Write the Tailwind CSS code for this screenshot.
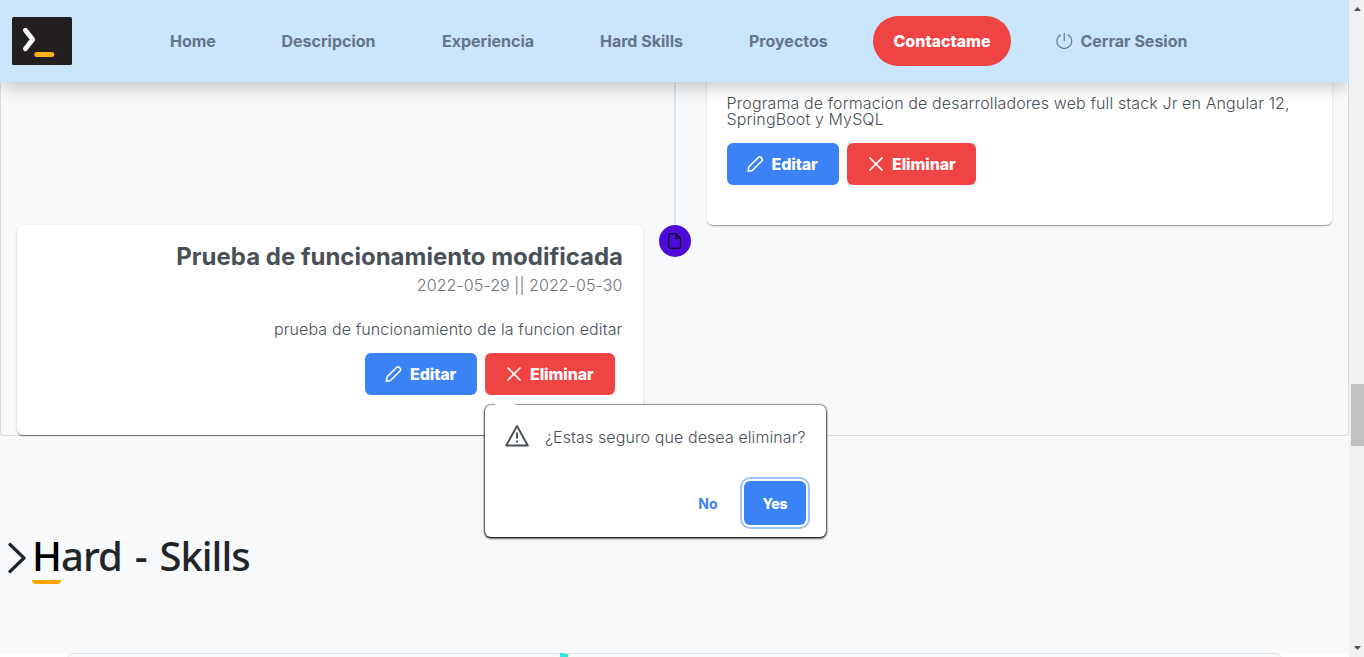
<!DOCTYPE html>
<html lang="es">
<head>
<meta charset="utf-8">
<title>Portfolio</title>
<script src="https://cdn.jsdelivr.net/npm/@tailwindcss/browser@4"></script>
</head>
<body class="flex h-[657px] w-[1364px] overflow-hidden bg-white font-['Inter',sans-serif] text-[#495057]">
<div class="relative flex h-[657px] w-[1349px] flex-col overflow-hidden">
  <header class="relative z-10 flex h-[82px] shrink-0 items-center bg-[#c9e6fb] pl-3 text-base font-bold text-[#64748b] shadow-[0_8px_16px_-2px_rgba(0,0,0,0.2)]">
    <svg class="mr-[98px] h-12 w-[60px]" viewBox="0 0 60 48" fill="none" stroke-linecap="round" stroke-linejoin="round">
      <rect width="60" height="48" rx="1.5" fill="#231f20"/>
      <path d="M13.4 13.2l7.3 9.3-7.3 9.3" stroke="#fff" stroke-width="4.8"/>
      <path d="M24.8 37.5h15" stroke="#fbb017" stroke-width="5"/>
    </svg>
    <nav class="flex items-center whitespace-nowrap">
      <a class="w-[111.500px]">Home</a>
      <a class="w-[160.500px]">Descripcion</a>
      <a class="w-[158px]">Experiencia</a>
      <a class="w-[149px]">Hard Skills</a>
      <a class="w-[124px]">Proyectos</a>
      <a class="flex h-[50px] w-[138px] items-center justify-center rounded-full bg-[#ef4444] font-extrabold text-white">Contactame</a>
      <a class="ml-[45px] flex items-center">
        <svg class="mr-2 h-4 w-[16.500px]" viewBox="0 0 16 16" fill="none" stroke="#64748b" stroke-width="1.2" stroke-linecap="round"><path d="M8 .7v7M4 1.9a7.4 7.4 0 1 0 8.1 0"/></svg>
        Cerrar Sesion</a>
    </nav>
  </header>

  <main class="flex h-[571px] shrink-0 flex-col bg-[#f8f9fb]">
    <section class="h-[354px] rounded-b border-x border-b border-[#d8dadd] px-4">
      <div class="grid grid-cols-[626px_64px_625px]">
        <div></div>
        <div class="flex justify-center"><div class="h-[143px] w-0.5 bg-[#dee2e6]"></div></div>
        <article class="h-[143px] rounded-b-md bg-white px-5 pt-[13px] shadow-[0_2px_1px_-1px_rgba(0,0,0,0.2),0_1px_1px_rgba(0,0,0,0.14),0_1px_3px_rgba(0,0,0,0.12)]">
          <p class="-ml-[0.500px] text-base leading-4 font-light tracking-[0.12px] whitespace-nowrap">Programa de formacion de desarrolladores web full stack Jr en Angular 12,<br>SpringBoot y MySQL</p>
          <div class="mt-4 flex gap-2 font-extrabold tracking-[-0.1px] text-white">
            <button class="flex h-[42px] w-28 items-center rounded-md bg-[#3b82f6] pl-5">
              <svg class="mr-2 h-4 w-[16.500px]" viewBox="0 0 16 16" fill="none" stroke="currentColor" stroke-width="1.6" stroke-linejoin="round"><path d="M.9 15.200l.6-4.200L11 1.500q1.500-1.300 3.200.3t.3 3.200L5 14.500z"/></svg>Editar</button>
            <button class="flex h-[42px] w-[129px] items-center rounded-md bg-[#ef4444] pl-[21px]">
              <svg class="mr-2 h-4 w-4" viewBox="0 0 16 16" stroke="currentColor" stroke-width="1.7" stroke-linecap="round"><path d="M2 2l12 12M14 2L2 14"/></svg>Eliminar</button>
          </div>
        </article>
        <article class="flex h-[210px] flex-col items-end rounded-md bg-white px-5 pt-[17px] shadow-[0_2px_1px_-1px_rgba(0,0,0,0.3),0_1px_1px_rgba(0,0,0,0.2),0_1px_3px_rgba(0,0,0,0.12)]">
          <h3 class="text-2xl leading-[29px] font-bold whitespace-nowrap">Prueba de funcionamiento modificada</h3>
          <p class="mt-1 mr-[0.500px] text-base leading-5 font-light tracking-[0.08px] text-[#6c757d]">2022-05-29 || 2022-05-30</p>
          <p class="mt-6 mr-[0.500px] text-base leading-5 font-light tracking-[0.12px]">prueba de funcionamiento de la funcion editar</p>
          <div class="mt-3.5 mr-2 flex gap-2 font-extrabold tracking-[-0.1px] text-white">
            <button class="flex h-[42px] w-28 items-center rounded-md bg-[#3b82f6] pl-5">
              <svg class="mr-2 h-4 w-[17px]" viewBox="0 0 16 16" fill="none" stroke="currentColor" stroke-width="1.6" stroke-linejoin="round"><path d="M.9 15.200l.6-4.200L11 1.500q1.500-1.300 3.200.3t.3 3.200L5 14.500z"/></svg>Editar</button>
            <button class="flex h-[42px] w-[130px] items-center rounded-md bg-[#ef4444] pl-[21px]">
              <svg class="mr-2 h-4 w-4" viewBox="0 0 16 16" stroke="currentColor" stroke-width="1.7" stroke-linecap="round"><path d="M2 2l12 12M14 2L2 14"/></svg>Eliminar</button>
          </div>
        </article>
        <div class="flex justify-center">
          <div class="flex h-8 w-8 items-center justify-center rounded-full bg-[#4c0bd8]">
            <svg class="h-4 w-4" viewBox="0 0 16 16" fill="none" stroke="#000" stroke-width="1.1" stroke-linejoin="round"><path d="M3.300.8h5.700l4.500 4.300v8.600q0 1.500-1.500 1.500H3.300Q1.800 15.200 1.800 13.700V2.300Q1.800.8 3.300.8zM9 .8v4.500h4.500"/></svg>
          </div>
        </div>
      </div>
    </section>
    <h2 class="mt-[94px] flex pl-2 font-['Noto_Sans',sans-serif] text-[40px] leading-[52px] font-medium whitespace-nowrap text-[#212529]">
      <svg class="mt-3 mr-1.5 h-8 w-[18px]" viewBox="0 0 18 32" fill="none" stroke="#212529" stroke-width="3.200" stroke-linecap="round" stroke-linejoin="round"><path d="M2 2.500l14 13.500L2 29.500"/></svg>
      <span class="h-[54px] w-[29px] rounded-b-sm border-b-4 border-[#ffa500] text-black">H</span><span class="tracking-[-1px] [word-spacing:3.500px]">ard - Skills</span>
    </h2>
  </main>
  <div class="ml-[67px] h-10 w-[1215px] shrink-0 rounded-t-md border border-[#dee2e6] bg-[#f8f9fb] pl-[492px]">
    <div class="-mt-px flex"><i class="h-5 w-1 bg-[#2ee6f0]"></i><i class="mt-px h-4 w-1 bg-[#35e5d0]"></i></div>
  </div>

  <div class="absolute top-[405px] left-[485px] z-20 h-[132px] w-[341px] rounded-md bg-white shadow-[0_0_1px_1px_rgba(0,0,0,0.3),0_1px_3px_rgba(0,0,0,0.9),0_1px_2px_rgba(0,0,0,0.6)]">
    <div class="absolute -top-2 left-2.5 h-2.5 w-5 bg-white"></div>
    <div class="flex items-center pt-[18px] pl-5">
      <svg class="h-6 w-6" viewBox="0 0 24 24" fill="none" stroke="#495057" stroke-width="1.9" stroke-linejoin="round"><path d="M12 2L1.200 21.500h21.600zM12 8.500v6M12 16.500v2"/></svg>
      <span class="mt-0.5 ml-4 text-base font-light tracking-[0.1px] whitespace-nowrap">¿Estas seguro que desea eliminar?</span>
    </div>
    <div class="mt-8 flex items-center justify-end pr-5 text-sm font-bold">
      <span class="mt-0.5 mr-[26.500px] text-[#3b82f6]">No</span>
      <button class="flex h-[44px] w-[62px] items-center justify-center rounded-md bg-[#3b82f6] pt-0.5 font-extrabold tracking-[-0.1px] text-white shadow-[0_0_0_2px_#fff,0_0_0_4px_#9dc1fb]">Yes</button>
    </div>
  </div>
</div>
<aside class="flex h-[657px] w-[15px] flex-col items-center bg-[#f1f1f1] pl-0.5">
  <svg class="mt-[7px] h-1 w-[7px]" viewBox="0 0 7 4" fill="#505050"><path d="M3.500 0L7 4H0z"/></svg>
  <div class="mt-[373px] h-[62px] w-[13px] bg-[#c1c1c1]"></div>
  <svg class="mt-[200px] h-1 w-[7px]" viewBox="0 0 7 4" fill="#505050"><path d="M0 0h7L3.500 4z"/></svg>
</aside>
</body>
</html>
